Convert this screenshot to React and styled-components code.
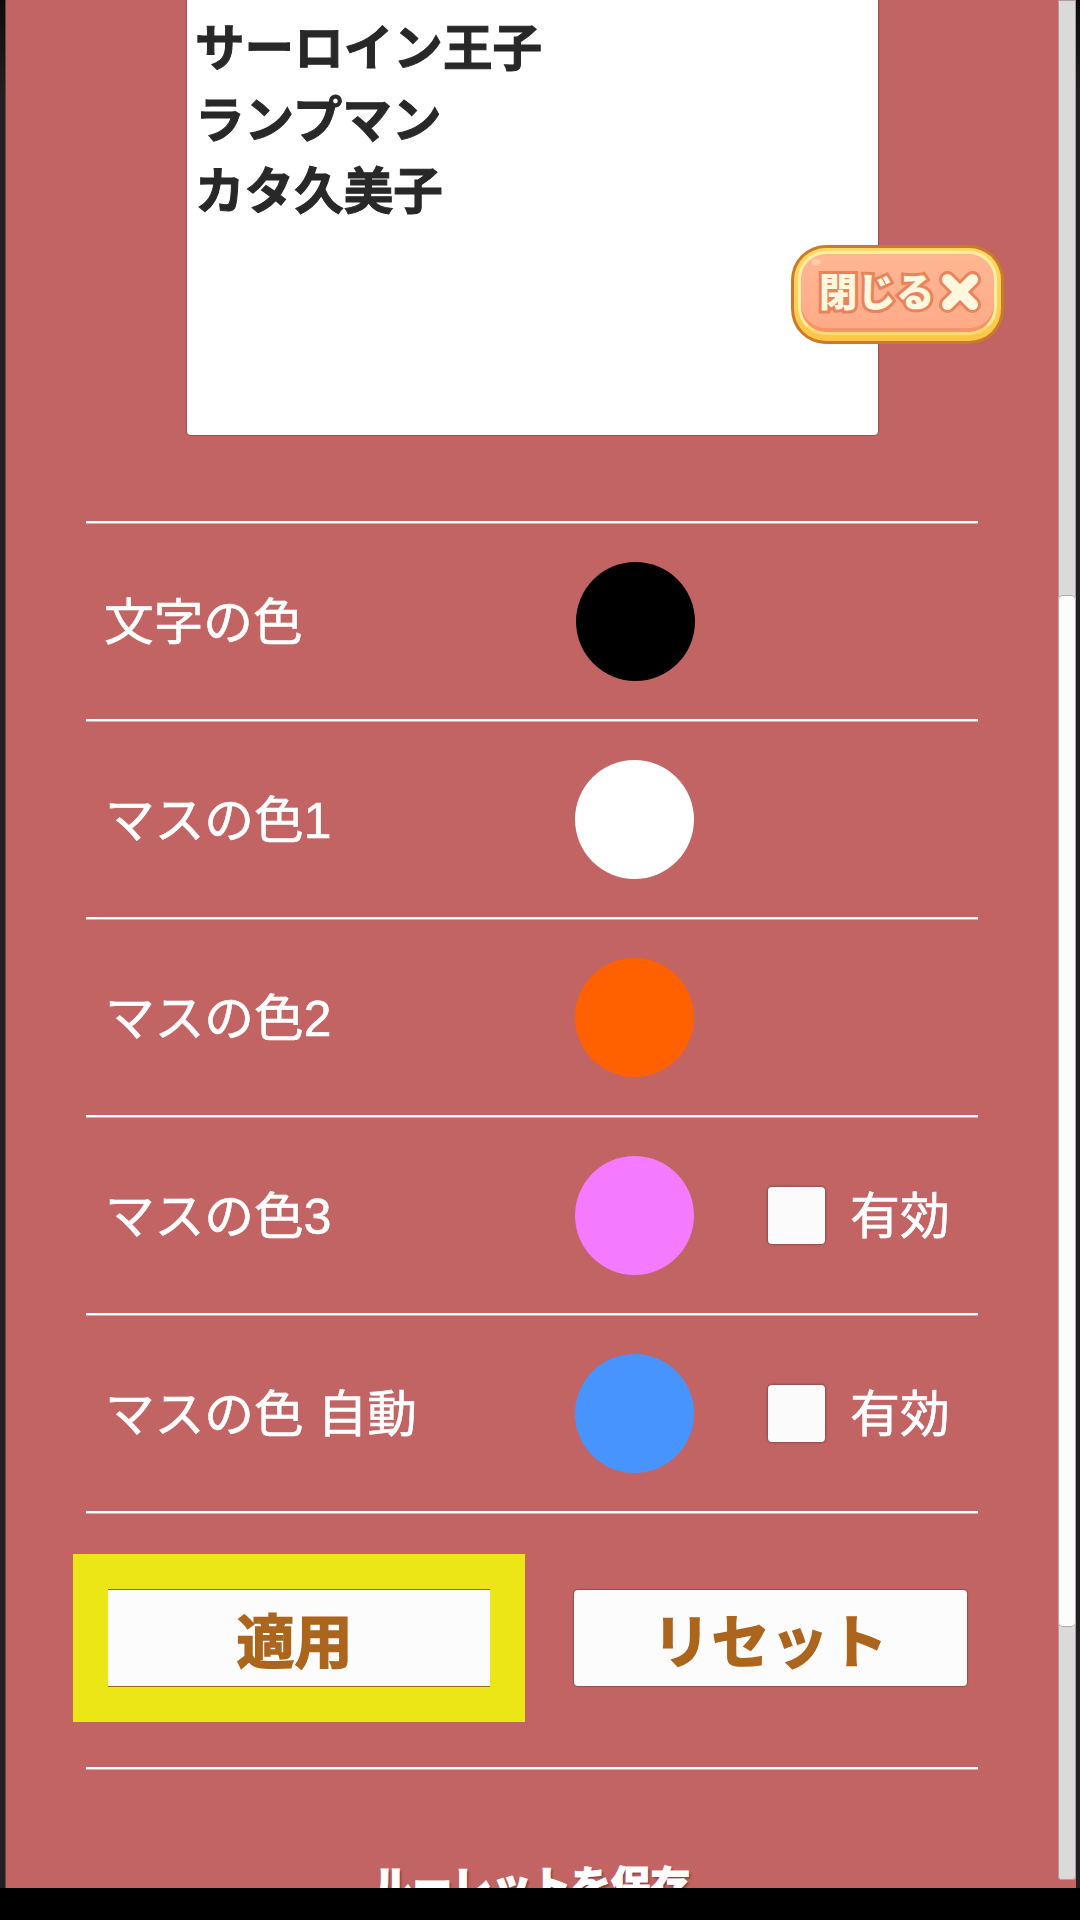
import React from "react";
import styled, { createGlobalStyle } from "styled-components";

const jp = `"Noto Sans CJK JP", "Noto Sans", sans-serif`;
const mixed = `"Liberation Sans", "Noto Sans CJK JP", sans-serif`;

const GlobalStyle = createGlobalStyle`
  *, *::before, *::after { box-sizing: border-box; }
  html, body { margin: 0; padding: 0; background: #000; }
  body { font-family: ${jp}; overflow: hidden; }
`;

const Screen = styled.div`
  position: relative;
  width: 1080px;
  height: 1920px;
  overflow: hidden;
  background: #000;
`;

const Viewport = styled.div`
  display: flex;
  height: 1888px;
  padding: 0 4px 0 5px;
  background: linear-gradient(#0c0c0c, #222022 5%, #222022);
`;

const Panel = styled.main`
  display: flex;
  flex: 1;
  height: 1888px;
  overflow: hidden;
  border-left: 1px solid #7c3c3c;
  background: #c26464;
`;

const Content = styled.div`
  display: flex;
  flex-direction: column;
  flex: 1;
  padding: 0 80px 0 80px;
`;

const NameBox = styled.div`
  flex: none;
  width: 691px;
  height: 435px;
  margin: 0 0 86px 101px;
  padding: 9px 0 0 8px;
  background: #fff;
  border-radius: 0 0 4px 4px;
  box-shadow: 0 0 1px 1px rgba(110, 70, 70, 0.55);
`;

const NameLine = styled.div`
  height: 71.5px;
  line-height: 71.5px;
  font-size: 49.6px;
  font-weight: 700;
  white-space: nowrap;
  color: #282828;
  -webkit-text-stroke: 1px #282828;
`;

const Row = styled.section`
  display: flex;
  align-items: center;
  flex: none;
  height: ${(p) => p.$height || 198}px;
  border-top: 2px solid #fff;
  box-shadow: inset 0 1px 0 rgba(255, 255, 255, 0.45);
`;

const Label = styled.div`
  width: ${(p) => (p.$shift ? 490 : 489)}px;
  margin-top: 3px;
  padding-left: ${(p) => (p.$shift ? 18 : 19)}px;
  font-family: ${mixed};
  font-size: 49.7px;
  line-height: 70px;
  white-space: pre;
  color: #fff;
  -webkit-text-stroke: 0.6px #fff;
`;

const Swatch = styled.div`
  flex: none;
  width: 119px;
  height: 119px;
  margin-top: 1px;
  border-radius: 50%;
  background: ${(p) => p.$color};
`;

const Toggle = styled.label`
  display: flex;
  align-items: center;
  gap: 25px;
  margin-left: 74px;
`;

const ToggleText = styled.span`
  position: relative;
  top: -2px;
  margin-top: -3px;
  font-size: 50px;
  line-height: 70px;
  color: #fff;
  -webkit-text-stroke: 0.6px #fff;
`;

const Box = styled.span`
  width: 57px;
  height: 57px;
  border-radius: 4px;
  background: #fbfbfb;
  box-shadow: 0 0 2px 1px rgba(110, 60, 60, 0.6);
`;

const Actions = styled(Row)`
  align-items: flex-start;
  gap: 49px;
  padding-top: 41px;
`;

const Highlight = styled.div`
  flex: none;
  width: 452px;
  height: 168px;
  margin-left: -13px;
  padding: 35px;
  background: #ece616;
`;

const Button = styled.button`
  display: flex;
  align-items: center;
  justify-content: center;
  flex: none;
  width: ${(p) => p.$width}px;
  height: ${(p) => p.$height}px;
  margin: ${(p) => p.$top || 0}px 0 0;
  padding: ${(p) => p.$pad};
  border: ${(p) => (p.$square ? "solid #a8641c" : "none")};
  border-width: ${(p) => (p.$square ? "1px 0" : "0")};
  border-radius: ${(p) => (p.$square ? 0 : 4)}px;
  background: #fcfcfc;
  box-shadow: ${(p) => (p.$square ? "none" : "0 0 1px 1px rgba(110, 60, 60, 0.55)")};
  font: 700 58px/80px ${jp};
  letter-spacing: ${(p) => p.$spacing || 0}px;
  color: #ac651c;
  -webkit-text-stroke: 1.6px #ac651c;
`;

const SaveRow = styled(Row)`
  align-items: flex-start;
  justify-content: center;
  padding-top: 85px;
`;

const SaveTitle = styled.h2`
  margin: 0 1px 0 0;
  font-size: 39.7px;
  line-height: 58px;
  font-weight: 900;
  white-space: nowrap;
  color: #fff;
  -webkit-text-stroke: 1px #fff;
  text-shadow: 2px 2px 2px rgba(90, 40, 40, 0.6);
`;

const Track = styled.div`
  flex: none;
  width: 18px;
  height: 1880px;
  padding-top: 595px;
  border-radius: 0 0 4px 4px;
  background: #dadada;
  box-shadow: inset 0 0 0 1px #b39a9a;
`;

const Thumb = styled.div`
  width: 18px;
  height: 1032px;
  border-radius: 5px;
  background: #fcfcfc;
  box-shadow: inset 0 0 0 1px #b7a6a6;
`;

const Close = styled.button`
  position: absolute;
  left: 791px;
  top: 245px;
  width: 213px;
  height: 99px;
  padding: 3px;
  border: 0;
  border-radius: 35px;
  background: #cb7a2b;
  box-shadow: 1px 0 1px rgba(190, 110, 60, 0.6);
`;

const CloseGold = styled.span`
  display: block;
  height: 93px;
  padding: 3px 4px 6px 4px;
  border-radius: 32px;
  background: linear-gradient(#ffd867, #ffcf55 60%, #fdc544);
`;

const CloseFace = styled.span`
  display: flex;
  align-items: center;
  gap: 2px;
  height: 84px;
  padding: 0 0 2px 18px;
  border: 3px solid #ffee9f;
  border-bottom-color: #ffdc78;
  border-radius: 28px;
  background: radial-gradient(ellipse 6px 4px at 15px 8px, #ffcdb4 50%, transparent), linear-gradient(#ffb693, #ffaa87);
  box-shadow: inset 0 -4px 0 #fa9468;
`;

const CloseText = styled.span`
  margin-top: -6px;
  font: 900 38.5px/56px ${jp};
  white-space: nowrap;
  color: #fff8de;
  -webkit-text-stroke: 6px #e9835c;
  paint-order: stroke fill;
  stroke-linejoin: round;
`;

const Cross = styled.svg`
  flex: none;
  width: 46px;
  height: 46px;
`;

const rows = [
  { label: "文字の色", color: "#000000", shift: true },
  { label: "マスの色1", color: "#ffffff" },
  { label: "マスの色2", color: "#ff6000" },
  { label: "マスの色3", color: "#f47aff", toggle: true },
  { label: "マスの色 自動", color: "#4894ff", toggle: true },
];

export default function App() {
  return (
    <Screen>
      <GlobalStyle />
      <Viewport>
        <Panel>
          <Content>
            <NameBox>
              <NameLine>サーロイン王子</NameLine>
              <NameLine>ランプマン</NameLine>
              <NameLine>カタ久美子</NameLine>
            </NameBox>
            {rows.map((r) => (
              <Row key={r.label}>
                <Label $shift={r.shift}>{r.label}</Label>
                <Swatch $color={r.color} />
                {r.toggle && (
                  <Toggle>
                    <Box />
                    <ToggleText>有効</ToggleText>
                  </Toggle>
                )}
              </Row>
            ))}
            <Actions $height={256}>
              <Highlight>
                <Button $square $width={382} $height={98} $pad="0 9px 0 0">適用</Button>
              </Highlight>
              <Button $width={393} $height={96} $top={36} $spacing={1} $pad="0 0 1px">リセット</Button>
            </Actions>
            <SaveRow $height={200}>
              <SaveTitle>ルーレットを保存</SaveTitle>
            </SaveRow>
          </Content>
          <Track>
            <Thumb />
          </Track>
        </Panel>
      </Viewport>
      <Close>
        <CloseGold>
          <CloseFace>
            <CloseText>閉じる</CloseText>
            <Cross viewBox="0 0 46 46" fill="none" strokeLinecap="round">
              <path d="M10.5 10.5 35.5 35.5M35.5 10.5 10.5 35.5" stroke="#e9835c" strokeWidth="17" />
              <path d="M10.5 10.5 35.5 35.5M35.5 10.5 10.5 35.5" stroke="#fff8de" strokeWidth="11" />
            </Cross>
          </CloseFace>
        </CloseGold>
      </Close>
    </Screen>
  );
}
